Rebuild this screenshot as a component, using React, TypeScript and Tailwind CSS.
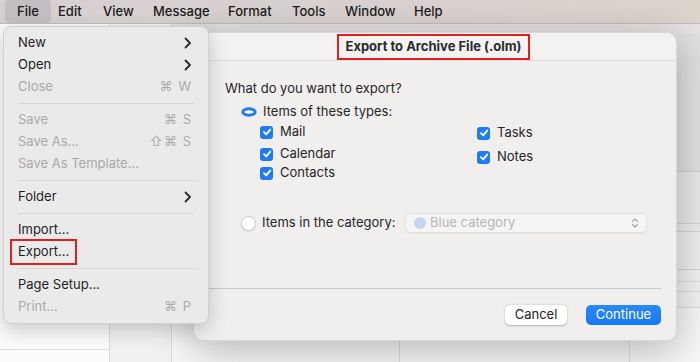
import React from "react";

const font = { fontFamily: "Inter, 'Liberation Sans', sans-serif" };

const Chevron = () => (
  <svg width="8" height="12" viewBox="0 0 8 12" className="shrink-0">
    <path d="M1.5 1.5 L6 6 L1.5 10.5" fill="none" stroke="#2a2a2a" strokeWidth="1.8" strokeLinecap="round" strokeLinejoin="round" />
  </svg>
);

type Item = { label: string; disabled?: boolean; shortcut?: string; sub?: boolean; boxed?: boolean };

const MenuRow = ({ item }: { item: Item }) => (
  <div className="h-[22px] flex items-center justify-between pl-[14px] pr-[16px]">
    <span
      className={
        (item.disabled ? "text-[#a9a9a9] " : "text-[#1f1f1f] ") +
        (item.boxed ? "outline-2 outline-[#e0201f] outline-offset-0 px-[6px] -ml-[6px] py-[1px]" : "")
      }
    >
      {item.label}
    </span>
    {item.sub && <Chevron />}
    {item.shortcut && <span className="text-[#aaaaaa] tracking-[1px]">{item.shortcut}</span>}
  </div>
);

const Sep = () => (
  <div className="h-[11px] flex items-center px-[14px]">
    <div className="h-px w-full bg-[#d6d5d5]" />
  </div>
);

const Check = ({ label }: { label: string }) => (
  <div className="flex items-center gap-[7px] h-[18px]">
    <div className="w-[13px] h-[13px] rounded-[3px] bg-[#1e7bf3] flex items-center justify-center">
      <svg width="10" height="10" viewBox="0 0 10 10">
        <path d="M2 5.2 L4.2 7.4 L8.2 2.6" fill="none" stroke="white" strokeWidth="1.9" strokeLinecap="round" strokeLinejoin="round" />
      </svg>
    </div>
    <span>{label}</span>
  </div>
);

export default function App() {
  const bar = ["File", "Edit", "View", "Message", "Format", "Tools", "Window", "Help"];
  const widths = ["w-[41px]", "w-[45px]", "w-[50px]", "w-[75px]", "w-[64px]", "w-[53px]", "w-[69px]", "w-[40px]"];

  return (
    <div className="relative w-[700px] h-[362px] overflow-hidden bg-[#f4f4f4] text-[13px] text-[#262626]" style={font}>
      {/* menu bar */}
      <div className="h-[24px] flex items-center pl-[17px] bg-gradient-to-r from-[#d6d0d1] via-[#d9d2d1] to-[#ddd4cc] border-b border-[#c4bdbc] font-medium text-[#1c1c1c]">
        {bar.map((b, i) => (
          <div key={b} className={widths[i]}>
            {i === 0 ? (
              <span className="rounded-[5px] bg-[#c3bec0] px-[12px] -mx-[12px] py-[4px]">{b}</span>
            ) : (
              b
            )}
          </div>
        ))}
      </div>

      {/* background window */}
      <div className="h-[338px] flex">
        <div className="w-[110px] bg-[#fbfbfb] border-r border-[#dadada] flex flex-col">
          <div className="h-[326px] border-b border-[#dedede]" />
        </div>
        <div className="w-[62px] bg-[#f1f1f1] border-r border-[#dadada]" />
        <div className="flex-1 flex flex-col bg-[#f7f7f7]">
          <div className="h-[10px] bg-[#e4e2e2]" />
          <div className="h-[138px] bg-[#e0e0e0] border-b border-[#cfcfcf]" />
          <div className="h-[52px] bg-[#e9e9e9] border-b border-[#d6d6d6]" />
          <div className="h-[8px] bg-[#ececec] border-b border-[#d6d6d6]" />
          <div className="h-[38px] bg-[#efefef] border-b border-[#d2d2d2]" />
          <div className="h-[12px] bg-[#f1f1f1] border-b border-[#dcdcdc]" />
          <div className="h-[10px] bg-[#f2f2f2] border-b border-[#dcdcdc]" />
          <div className="h-[16px] bg-[#f3f3f3] border-b border-[#dcdcdc]" />
          <div className="flex-1 flex">
            <div className="w-[228px] border-r border-[#dcdcdc]" />
            <div className="w-[230px] border-r border-[#dcdcdc]" />
            <div className="flex-1" />
          </div>
        </div>
      </div>

      {/* dialog */}
      <div className="absolute left-[193px] top-[32px] w-[484px] h-[309px] rounded-[10px] bg-[#f0efee] shadow-[0_8px_40px_rgba(0,0,0,0.28)] border border-[#d9d8d8] flex flex-col">
        <div className="h-[28px] flex items-center justify-center border-b border-[#dedddc] bg-[#f3f2f1] rounded-t-[10px]">
          <span className="font-bold text-[#2b2b2b] border-2 border-[#e0201f] px-[6px] h-[26px] flex items-center -ml-[3px]">
            Export to Archive File (.olm)
          </span>
        </div>
        <div className="flex flex-col pl-[31px]">
          <div className="mt-[19px] h-[16px] leading-[16px]">What do you want to export?</div>
          <div className="mt-[8px] ml-[16px] flex items-center gap-[6px] h-[16px]">
            <svg width="16" height="10" viewBox="0 0 16 10">
              <ellipse cx="8" cy="5" rx="6.2" ry="3.2" fill="white" stroke="#1e7bf3" strokeWidth="3" />
            </svg>
            <span>Items of these types:</span>
          </div>
          <div className="ml-[35px] flex">
            <div className="w-[217px] flex flex-col">
              <div className="mt-[3px]"><Check label="Mail" /></div>
              <div className="mt-[4px]"><Check label="Calendar" /></div>
              <div className="mt-[1px]"><Check label="Contacts" /></div>
            </div>
            <div className="flex flex-col">
              <div className="mt-[4px]"><Check label="Tasks" /></div>
              <div className="mt-[6px]"><Check label="Notes" /></div>
            </div>
          </div>
          <div className="mt-[31px] ml-[16px] flex items-center h-[20px]">
            <div className="w-[15px] h-[15px] rounded-full bg-white border border-[#cfcfcf] shadow-[0_0.5px_1px_rgba(0,0,0,0.15)]" />
            <span className="ml-[6px] w-[143px]">Items in the category:</span>
            <div className="w-[242px] h-[20px] rounded-[5px] bg-[#f6f5f5] border border-[#e4e3e3] shadow-[0_0.5px_1px_rgba(0,0,0,0.06)] flex items-center pl-[8px] pr-[7px]">
              <div className="w-[12px] h-[12px] rounded-full bg-[#c6d6f2]" />
              <span className="ml-[4px] text-[#b6b6b6]">Blue category</span>
              <svg width="8" height="12" viewBox="0 0 8 12" className="ml-auto">
                <path d="M1.5 4.5 L4 2 L6.5 4.5 M1.5 7.5 L4 10 L6.5 7.5" fill="none" stroke="#a6a6a6" strokeWidth="1.2" strokeLinecap="round" strokeLinejoin="round" />
              </svg>
            </div>
          </div>
        </div>
        <div className="mt-[55px] mx-[15px] h-px bg-[#c9c8c8]" />
        <div className="mt-[16px] flex justify-end gap-[19px] pr-[15px]">
          <div className="w-[62px] h-[20px] rounded-[5px] bg-white shadow-[0_0.5px_2px_rgba(0,0,0,0.25)] flex items-center justify-center text-[#222]">
            Cancel
          </div>
          <div className="w-[75px] h-[20px] rounded-[5px] bg-gradient-to-b from-[#2a8af8] to-[#1677f3] flex items-center justify-center text-white">
            Continue
          </div>
        </div>
      </div>

      {/* File menu */}
      <div className="absolute left-[3px] top-[26px] w-[206px] py-[5px] rounded-[8px] bg-[#ebeaea] border border-[#d2d1d1] shadow-[0_6px_20px_rgba(0,0,0,0.2)]">
        <MenuRow item={{ label: "New", sub: true }} />
        <MenuRow item={{ label: "Open", sub: true }} />
        <MenuRow item={{ label: "Close", disabled: true, shortcut: "⌘ W" }} />
        <Sep />
        <MenuRow item={{ label: "Save", disabled: true, shortcut: "⌘ S" }} />
        <MenuRow item={{ label: "Save As...", disabled: true, shortcut: "⇧⌘ S" }} />
        <MenuRow item={{ label: "Save As Template...", disabled: true }} />
        <Sep />
        <MenuRow item={{ label: "Folder", sub: true }} />
        <Sep />
        <MenuRow item={{ label: "Import..." }} />
        <MenuRow item={{ label: "Export...", boxed: true }} />
        <Sep />
        <MenuRow item={{ label: "Page Setup..." }} />
        <MenuRow item={{ label: "Print...", disabled: true, shortcut: "⌘ P" }} />
      </div>
    </div>
  );
}
